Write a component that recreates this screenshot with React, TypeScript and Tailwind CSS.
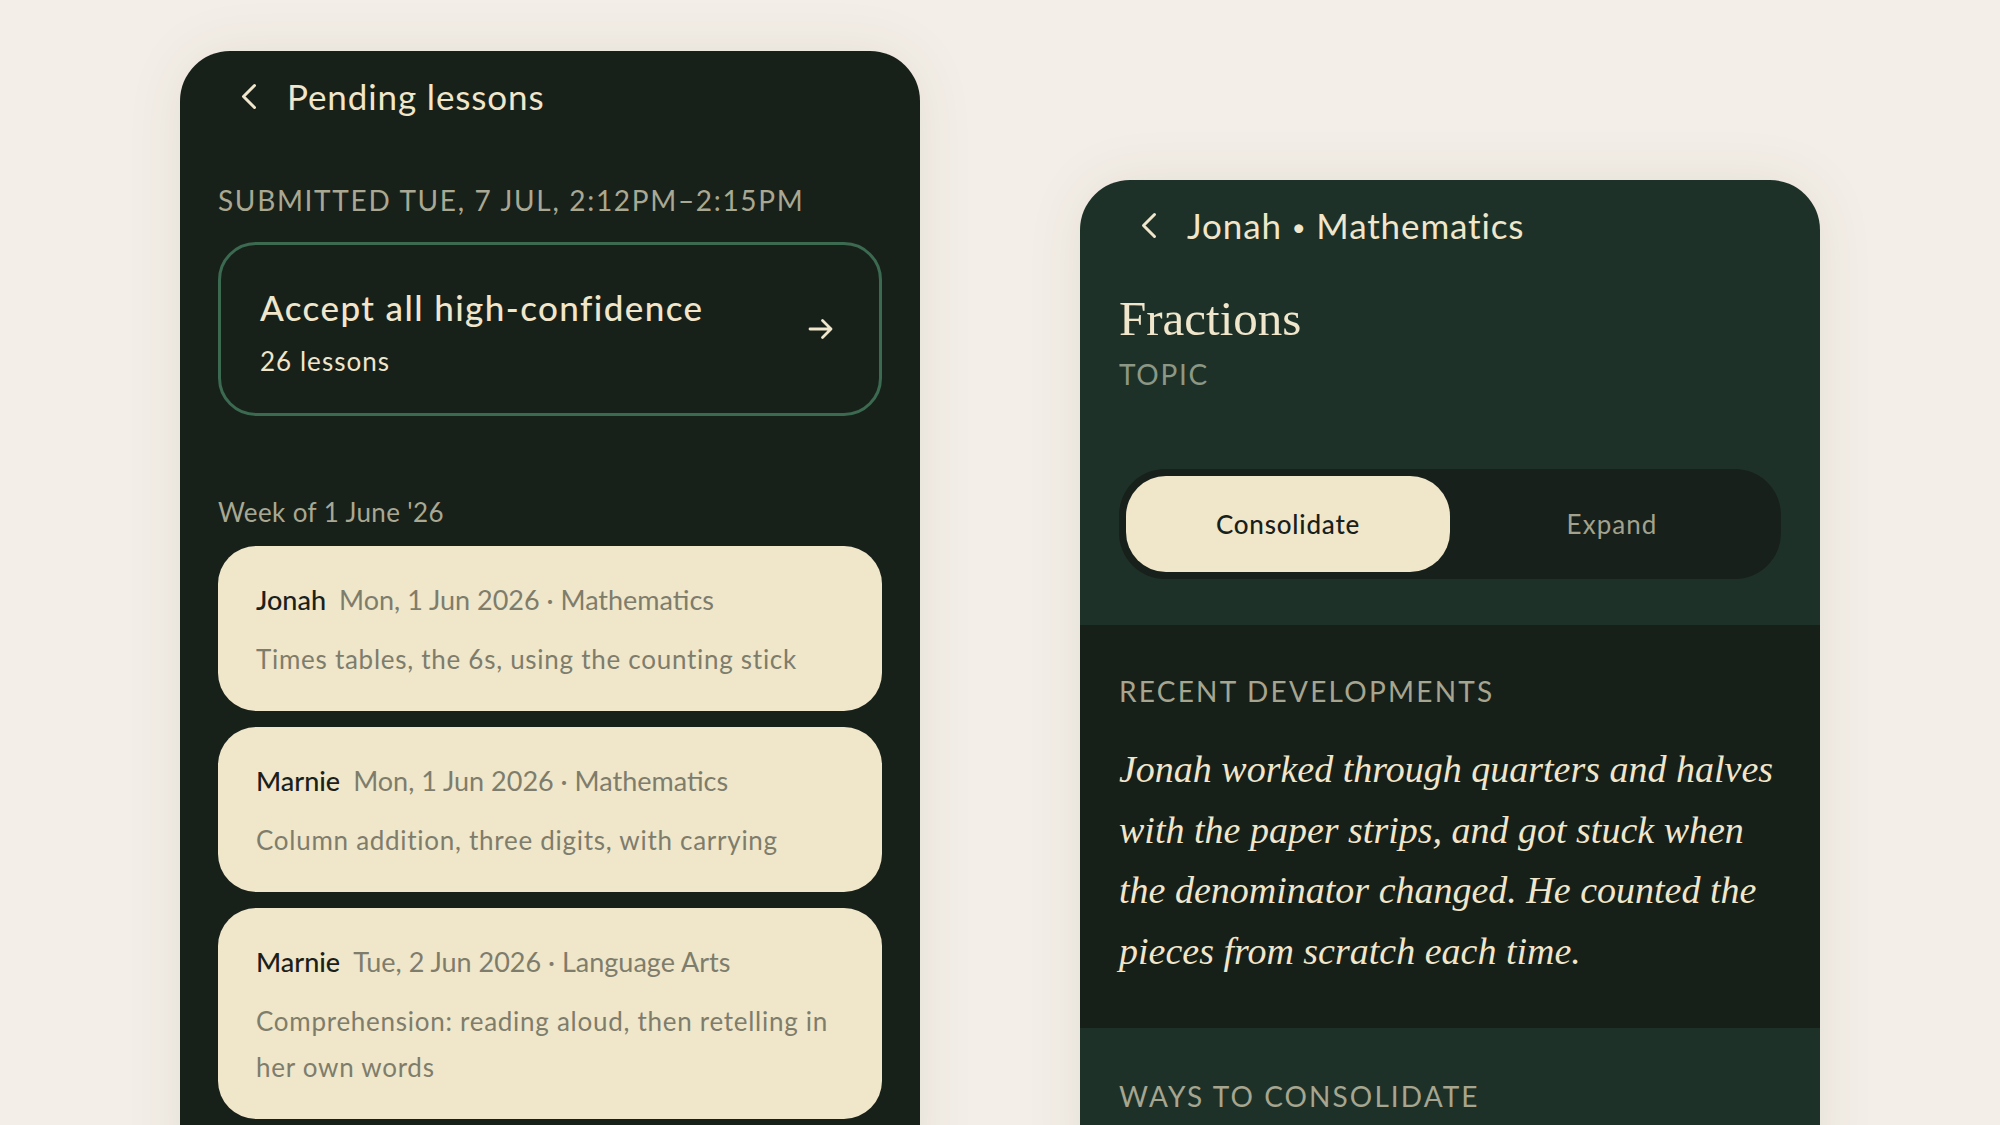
import React from 'react';

const Chevron = () => (
  <svg width="18" height="27" viewBox="0 0 18 27" fill="none" className="shrink-0">
    <path d="M14.5 2.5 3.5 13.5l11 11" stroke="#f0e6cb" strokeWidth="3" strokeLinecap="round" strokeLinejoin="round" />
  </svg>
);

const Arrow = () => (
  <svg width="28" height="28" viewBox="0 0 28 28" fill="none" className="shrink-0">
    <path d="M3 14h21M15.5 5.5 24 14l-8.5 8.5" stroke="#f0e6cb" strokeWidth="2.8" strokeLinecap="round" strokeLinejoin="round" />
  </svg>
);

const lessons = [
  { name: 'Jonah', meta: 'Mon, 1 Jun 2026 · Mathematics', text: 'Times tables, the 6s, using the counting stick' },
  { name: 'Marnie', meta: 'Mon, 1 Jun 2026 · Mathematics', text: 'Column addition, three digits, with carrying' },
  { name: 'Marnie', meta: 'Tue, 2 Jun 2026 · Language Arts', text: 'Comprehension: reading aloud, then retelling in her own words' },
];

const Header = ({ children }: { children: React.ReactNode }) => (
  <div className="flex items-center h-[91px] pl-[60px] gap-[29px]">
    <Chevron />
    <span className="text-[35px] leading-none tracking-[0.025em] text-[#f0e6cb]">{children}</span>
  </div>
);

const PendingLessons = () => (
  <div className="w-[740px] shrink-0 mt-[51px] rounded-t-[50px] bg-[#18201a] shadow-[0_0_60px_rgba(80,60,30,0.08)] pb-16">
    <Header>Pending lessons</Header>
    <div className="px-[38px]">
      <div className="mt-[40px] text-[28px] leading-[36px] tracking-[0.06em] text-[#a9a892]">
        SUBMITTED TUE, 7 JUL, 2:12PM–2:15PM
      </div>
      <div className="mt-[24px] h-[174px] rounded-[38px] border-[3px] border-[#3b6a50] flex items-center justify-between pl-[39px] pr-[44px]">
        <div className="flex flex-col pt-[6px]">
          <span className="text-[35px] leading-[40px] font-medium tracking-[0.04em] text-[#f0e6cb]">Accept all high-confidence</span>
          <span className="mt-[17px] text-[26px] leading-[34px] tracking-[0.04em] text-[#f0e6cb]">26 lessons</span>
        </div>
        <Arrow />
      </div>
      <div className="mt-[78px] text-[26px] leading-[36px] tracking-[0.015em] text-[#a9a892]">Week of 1 June '26</div>
      <div className="mt-[16px] flex flex-col gap-[16px]">
        {lessons.map((l, i) => (
          <div key={i} className="rounded-[38px] bg-[#f0e6ca] pl-[38px] pr-[40px] pt-[36px] pb-[29px]">
            <div className="flex items-baseline gap-[13px] text-[27px] leading-[36px]">
              <span className="font-medium text-[#1a211b]">{l.name}</span>
              <span className="text-[#7e7d6c]">{l.meta}</span>
            </div>
            <p className="mt-[18px] text-[26px] leading-[46px] tracking-[0.028em] text-[#7e7d6c]">{l.text}</p>
          </div>
        ))}
      </div>
    </div>
  </div>
);

const TopicDetail = () => (
  <div className="w-[740px] shrink-0 mt-[180px] rounded-t-[50px] bg-[#1e3128] shadow-[0_0_60px_rgba(80,60,30,0.08)] overflow-hidden">
    <Header>
      Jonah <span className="text-[24px] align-[3px]">•</span> Mathematics
    </Header>
    <div className="px-[39px] pb-[46px]">
      <h1 className="mt-[20px] font-['Liberation_Serif',serif] text-[49px] leading-[56px] text-[#f0e6cb]">Fractions</h1>
      <div className="mt-[9px] text-[28px] leading-[36px] tracking-[0.06em] text-[#8c9886]">TOPIC</div>
      <div className="mt-[77px] h-[110px] rounded-[46px] bg-[#17201a] p-[7px] grid grid-cols-2">
        <div className="rounded-[40px] bg-[#f0e6ca] flex items-center justify-center text-[26px] font-medium tracking-[0.03em] text-[#18201a]">Consolidate</div>
        <div className="flex items-center justify-center text-[26px] tracking-[0.04em] text-[#a3a28d]">Expand</div>
      </div>
    </div>
    <div className="bg-[#171f19] px-[39px] pt-[48px] pb-[46px]">
      <div className="text-[28px] leading-[36px] tracking-[0.08em] text-[#a6a590]">RECENT DEVELOPMENTS</div>
      <p className="mt-[30px] font-['Liberation_Serif',serif] italic text-[38px] leading-[60.7px] text-[#f0e6cb]">
        Jonah worked through quarters and halves
        <br />
        with the paper strips, and got stuck when
        <br />
        the denominator changed. He counted the
        <br />
        pieces from scratch each time.
      </p>
    </div>
    <div className="px-[39px] pt-[50px] pb-16">
      <div className="text-[28px] leading-[36px] tracking-[0.075em] text-[#a6a590]">WAYS TO CONSOLIDATE</div>
    </div>
  </div>
);

export default function App() {
  return (
    <div className="w-[2000px] h-[1125px] overflow-hidden bg-[#f3eee7] flex items-start pl-[180px] gap-[160px] font-['Lato','Noto_Sans',sans-serif]">
      <PendingLessons />
      <TopicDetail />
    </div>
  );
}
